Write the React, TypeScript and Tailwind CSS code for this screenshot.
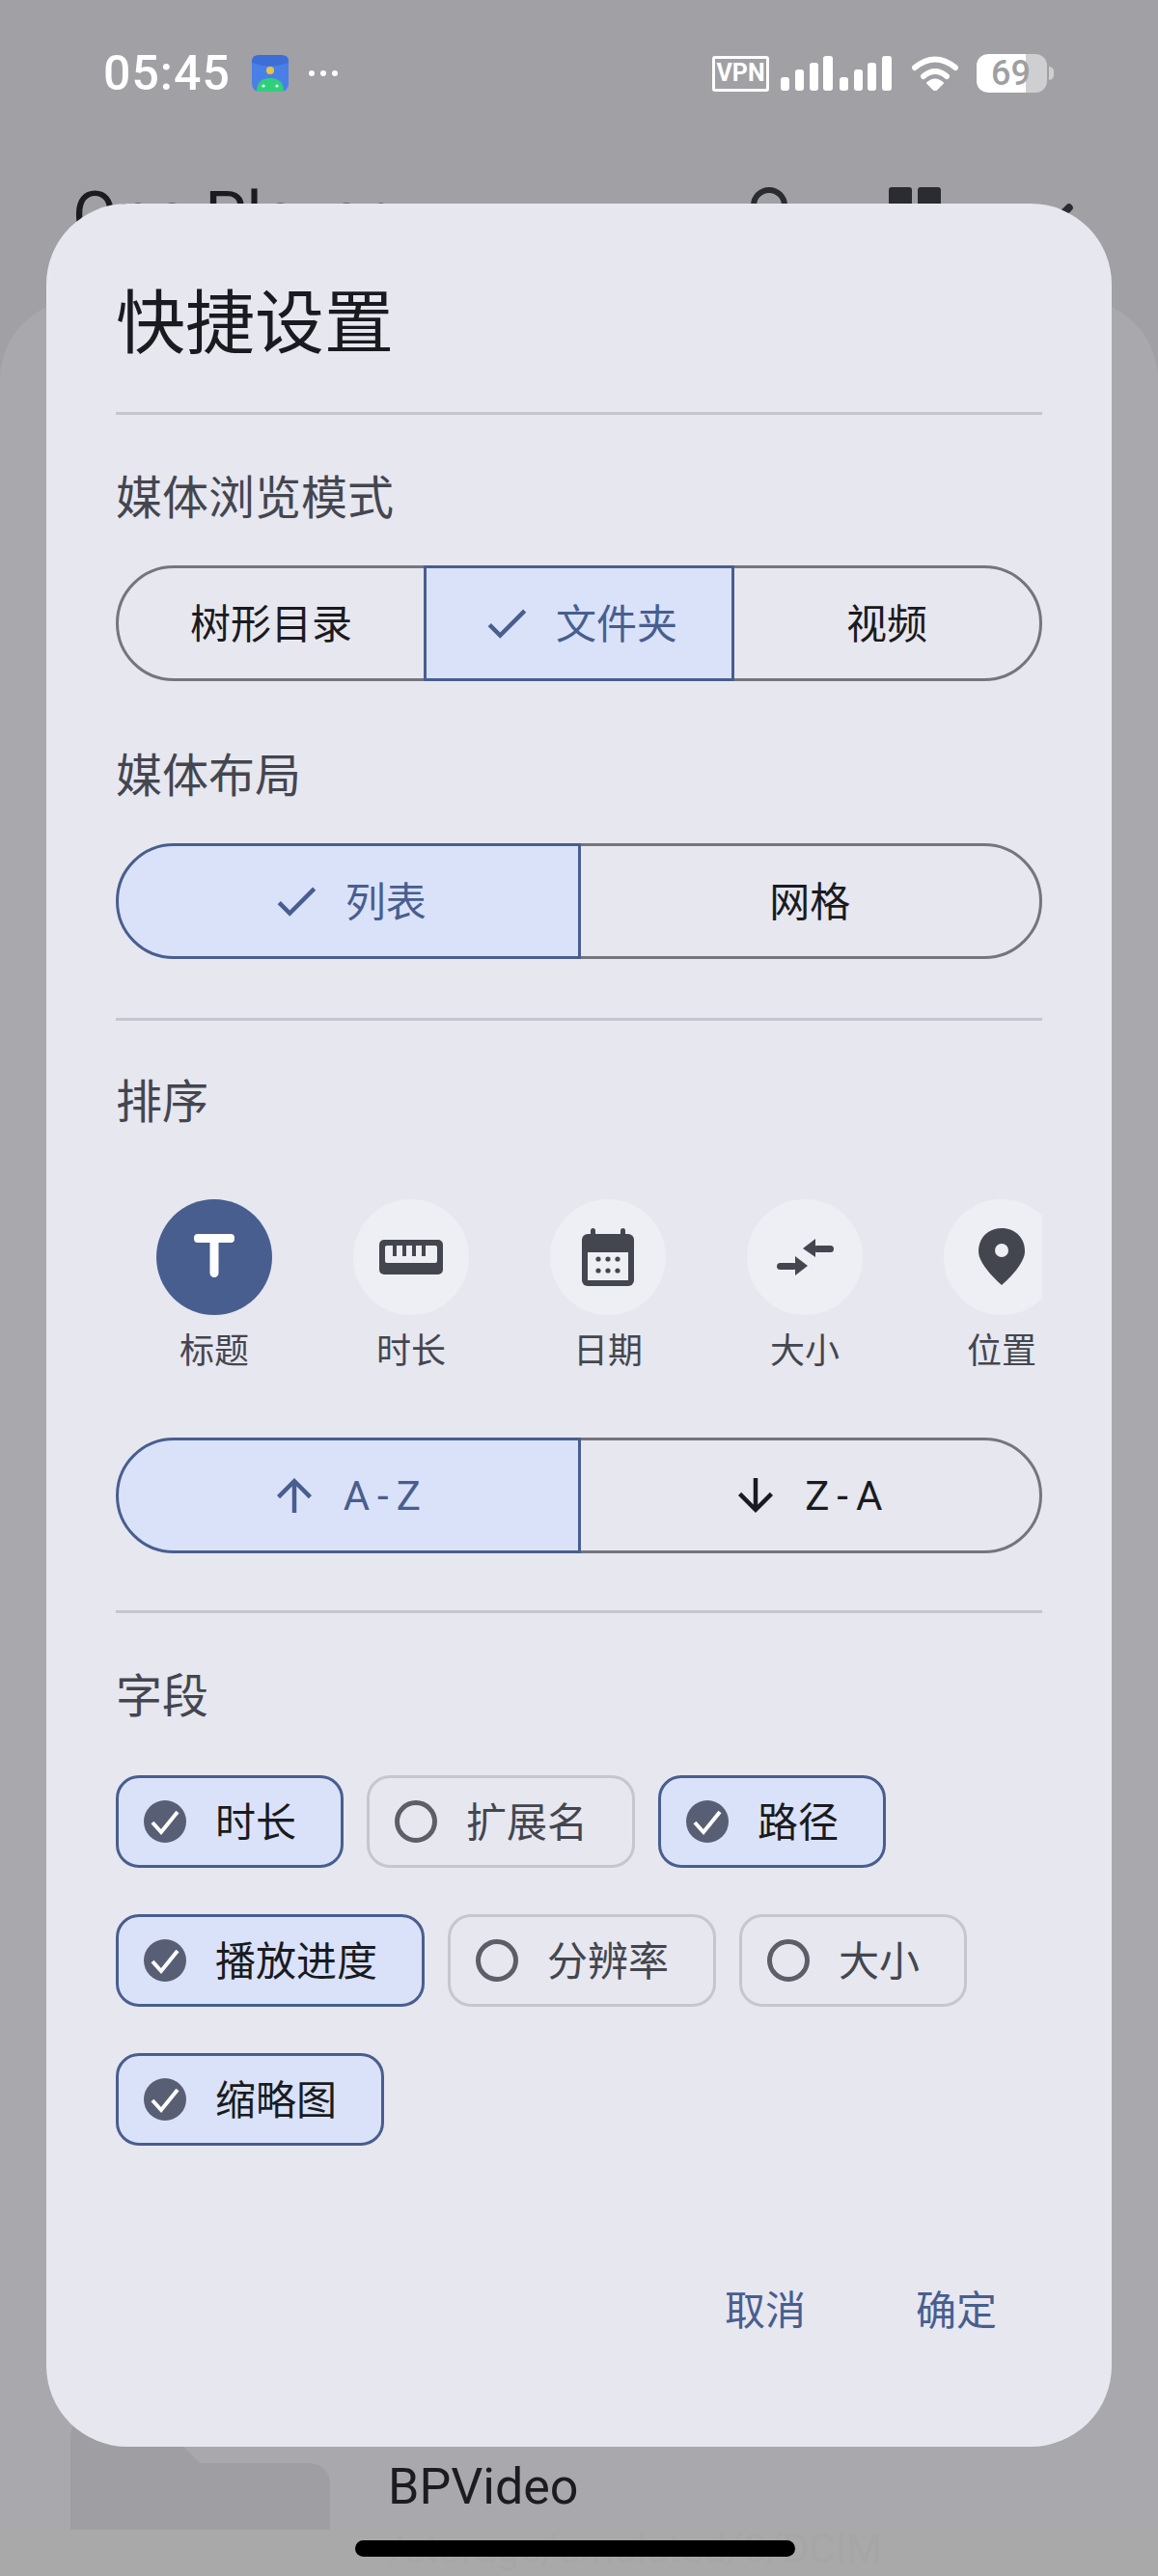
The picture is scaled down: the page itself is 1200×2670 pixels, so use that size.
import type { ReactNode } from "react";

const CHECK = "M9 16.17L4.83 12l-1.42 1.41L9 19 21 7l-1.41-1.41z";
const ARROW_UP = "M4 12l1.41 1.41L11 7.83V20h2V7.83l5.58 5.59L20 12l-8-8-8 8z";
const ARROW_DOWN = "M20 12l-1.41-1.41L13 16.17V4h-2v12.17l-5.58-5.59L4 12l8 8 8-8z";

const fields = [
  { label: "时长", on: true },
  { label: "扩展名", on: false },
  { label: "路径", on: true },
  { label: "播放进度", on: true },
  { label: "分辨率", on: false },
  { label: "大小", on: false },
  { label: "缩略图", on: true },
];

function Glyph({ d }: { d: string }) {
  return (
    <svg viewBox="0 0 24 24" className="w-[54px] h-[54px] shrink-0 fill-current">
      <path d={d} />
    </svg>
  );
}

function Segmented({
  items,
}: {
  items: { label: string; on?: boolean; icon?: string; latin?: boolean }[];
}) {
  return (
    <div className="flex h-[120px]">
      {items.map((item, i) => (
        <div
          key={item.label}
          className={`relative flex-1 flex items-center justify-center gap-[24px] border-[3px] text-[42px] ${
            i > 0 ? "-ml-[3px]" : ""
          } ${i === 0 ? "rounded-l-full" : ""} ${
            i === items.length - 1 ? "rounded-r-full" : ""
          } ${
            item.on
              ? "z-10 border-[#485e8f] bg-[#dae2f9] text-[#485e8f]"
              : "border-[#75757d] text-[#1a1b20]"
          }`}
        >
          {item.icon && <Glyph d={item.icon} />}
          <span className={item.latin ? "tracking-[8px]" : "pt-[3px]"}>{item.label}</span>
        </div>
      ))}
    </div>
  );
}

function SectionLabel({ className, children }: { className: string; children: ReactNode }) {
  return <div className={`text-[48px] leading-[64px] text-[#44464f] ${className}`}>{children}</div>;
}

function Divider({ className }: { className: string }) {
  return <div className={`h-[3px] bg-[#c5c6d0] ${className}`} />;
}

function SortItem({ label, on, children }: { label: string; on?: boolean; children: ReactNode }) {
  return (
    <div className="w-[204px] shrink-0 flex flex-col items-center">
      <div
        className={`w-[120px] h-[120px] rounded-full flex items-center justify-center ${
          on ? "bg-[#485e8f]" : "bg-[#eeeef5]"
        }`}
      >
        <svg viewBox="0 0 72 72" className="w-[72px] h-[72px]">
          {children}
        </svg>
      </div>
      <div className="mt-[14px] text-[36px] leading-[48px] text-[#44464f]">{label}</div>
    </div>
  );
}

function FieldChip({ label, on }: { label: string; on: boolean }) {
  return (
    <div
      className={`h-[96px] flex items-center pl-[26px] pr-[46px] rounded-[24px] border-[3px] text-[42px] ${
        on
          ? "border-[#485e8f] bg-[#dae2f9] text-[#1a1b20]"
          : "border-[#c5c6d0] text-[#44464f]"
      }`}
    >
      {on ? (
        <svg viewBox="0 0 44 44" className="w-[44px] h-[44px] mr-[30px]">
          <circle cx="22" cy="22" r="22" fill="#585f75" />
          <path d="M9 23l9 10 17-21" fill="none" stroke="#ffffff" strokeWidth="4" />
        </svg>
      ) : (
        <div className="w-[44px] h-[44px] mr-[30px] rounded-full border-[5px] border-[#5c5f68]" />
      )}
      <span className="pt-[3px]">{label}</span>
    </div>
  );
}

function StatusBar() {
  return (
    <div className="h-[150px] pl-[107px] pr-[108px] pt-[56px] flex items-start justify-between text-white">
      <div className="flex items-center h-[40px]">
        <span className="text-[50px] font-medium leading-[40px] tracking-[1px]">05:45</span>
        <svg viewBox="0 0 38 38" className="w-[38px] h-[38px] ml-[22px]">
          <rect width="38" height="38" rx="8" fill="#4a7fe8" />
          <path d="M0 8 Q19 15 38 8 V6 Q38 0 30 0 H8 Q0 0 0 6Z" fill="#3d6ed6" />
          <circle cx="19" cy="16" r="4" fill="#e8c24a" />
          <path d="M5 38 Q5 24 19 24 Q33 24 33 38Z" fill="#2fd07a" />
          <circle cx="12" cy="32" r="1.6" fill="#ffffff" />
          <circle cx="26" cy="32" r="1.6" fill="#ffffff" />
        </svg>
        <div className="flex gap-[6px] ml-[21px]">
          <div className="w-[6px] h-[6px] rounded-full bg-white" />
          <div className="w-[6px] h-[6px] rounded-full bg-white" />
          <div className="w-[6px] h-[6px] rounded-full bg-white" />
        </div>
      </div>
      <div className="flex items-center h-[40px]">
        <div className="w-[59px] h-[37px] border-[3px] border-white rounded-[3px] flex items-center justify-center text-[25px] font-bold">
          VPN
        </div>
        <svg viewBox="0 0 115 36" className="w-[115px] h-[36px] ml-[12px] fill-white">
          <rect x="0" y="22" width="9" height="14" rx="3" />
          <rect x="15" y="14" width="9" height="22" rx="3" />
          <rect x="30" y="7" width="9" height="29" rx="3" />
          <rect x="44" y="0" width="10" height="36" rx="3" />
          <rect x="61" y="22" width="9" height="14" rx="3" />
          <rect x="76" y="14" width="9" height="22" rx="3" />
          <rect x="90" y="7" width="9" height="29" rx="3" />
          <rect x="105" y="0" width="10" height="36" rx="3" />
        </svg>
        <svg viewBox="0 0 48 36" className="w-[48px] h-[36px] ml-[21px]">
          <path d="M3 12 Q24 -5 45 12" fill="none" stroke="#fff" strokeWidth="6" strokeLinecap="round" />
          <path d="M12 21 Q24 11 36 21" fill="none" stroke="#fff" strokeWidth="6" strokeLinecap="round" />
          <path d="M24 36 L16 28 Q24 21 32 28Z" fill="#fff" stroke="#fff" strokeWidth="2" strokeLinejoin="round" />
        </svg>
        <div className="relative flex ml-[19px] w-[73px] h-[40px] rounded-[12px] overflow-hidden">
          <div className="w-[51px] bg-white" />
          <div className="flex-1 bg-[#cfcfd2]" />
          <span className="absolute inset-0 pl-[15px] text-[36px] leading-[40px] font-medium text-[#9f9fa3]">
            69
          </span>
        </div>
        <div className="w-[5px] h-[14px] ml-[2px] rounded-r-full bg-[#cfcfd2]" />
      </div>
    </div>
  );
}

function Dialog() {
  return (
    <div className="absolute left-[48px] right-[48px] top-[211px] h-[2325px] rounded-[84px] bg-[#e7e7f0] px-[72px]">
      <div className="pt-[64px] pb-[30px] text-[72px] leading-[122px] text-[#1a1b20]">快捷设置</div>
      <Divider className="mt-0" />

      <SectionLabel className="mt-[55px]">媒体浏览模式</SectionLabel>
      <div className="mt-[37px]">
        <Segmented
          items={[
            { label: "树形目录" },
            { label: "文件夹", on: true, icon: CHECK },
            { label: "视频" },
          ]}
        />
      </div>

      <SectionLabel className="mt-[67px]">媒体布局</SectionLabel>
      <div className="mt-[37px]">
        <Segmented items={[{ label: "列表", on: true, icon: CHECK }, { label: "网格" }]} />
      </div>

      <Divider className="mt-[61px]" />
      <SectionLabel className="mt-[53px]">排序</SectionLabel>

      <div className="mt-[68px] flex overflow-hidden">
        <SortItem label="标题" on>
          <rect x="15" y="12" width="42" height="9" rx="4" fill="#ffffff" />
          <rect x="31.5" y="12" width="9" height="45" rx="4.5" fill="#ffffff" />
        </SortItem>
        <SortItem label="时长">
          <rect x="3" y="18" width="66" height="36" rx="5" fill="#44464f" />
          <rect x="9" y="24" width="54" height="18" rx="2" fill="#eeeef5" />
          <rect x="17" y="24" width="4" height="11" fill="#44464f" />
          <rect x="27" y="24" width="4" height="11" fill="#44464f" />
          <rect x="37" y="24" width="4" height="11" fill="#44464f" />
          <rect x="47" y="24" width="4" height="11" fill="#44464f" />
        </SortItem>
        <SortItem label="日期">
          <rect x="18" y="6" width="5" height="10" rx="2.5" fill="#44464f" />
          <rect x="49" y="6" width="5" height="10" rx="2.5" fill="#44464f" />
          <rect x="9" y="12" width="54" height="54" rx="6" fill="#44464f" />
          <rect x="15" y="31" width="42" height="29" fill="#eeeef5" />
          <circle cx="26" cy="38" r="2.6" fill="#44464f" />
          <circle cx="36" cy="38" r="2.6" fill="#44464f" />
          <circle cx="46" cy="38" r="2.6" fill="#44464f" />
          <circle cx="26" cy="50" r="2.6" fill="#44464f" />
          <circle cx="36" cy="50" r="2.6" fill="#44464f" />
          <circle cx="46" cy="50" r="2.6" fill="#44464f" />
        </SortItem>
        <SortItem label="大小">
          <path d="M34 27 L47 17 V36Z" fill="#44464f" />
          <rect x="45" y="24" width="21" height="7" rx="3.5" fill="#44464f" />
          <path d="M39 45 L26 35 V55Z" fill="#44464f" />
          <rect x="7" y="42" width="21" height="7" rx="3.5" fill="#44464f" />
        </SortItem>
        <SortItem label="位置">
          <path d="M36 6 C22 6 12 16 12 30 C12 42 28 58 36 65 C44 58 60 42 60 30 C60 16 50 6 36 6Z" fill="#44464f" />
          <circle cx="36" cy="29" r="7" fill="#eeeef5" />
        </SortItem>
      </div>

      <div className="mt-[65px]">
        <Segmented
          items={[
            { label: "A-Z", on: true, icon: ARROW_UP, latin: true },
            { label: "Z-A", icon: ARROW_DOWN, latin: true },
          ]}
        />
      </div>

      <Divider className="mt-[59px]" />
      <SectionLabel className="mt-[55px]">字段</SectionLabel>

      <div className="mt-[49px] flex flex-wrap gap-x-[24px] gap-y-[48px]">
        {fields.map((f) => (
          <FieldChip key={f.label} label={f.label} on={f.on} />
        ))}
      </div>

      <div className="mt-[140px] flex justify-end gap-[114px] pr-[47px] text-[42px] leading-[64px] text-[#485e8f]">
        <span>取消</span>
        <span>确定</span>
      </div>
    </div>
  );
}

export default function App() {
  return (
    <div className="relative w-[1200px] h-[2670px] overflow-hidden bg-[#a0a0a5] font-['Roboto','Noto_Sans_CJK_SC',sans-serif]">
      <StatusBar />

      {/* app bar behind the dialog, only its top edge shows */}
      <div className="h-[160px] pl-[75px] pr-[96px] flex items-start justify-between text-[#1b1b20]">
        <div className="mt-[38px] text-[68px] leading-[72px]">One Player</div>
        <div className="flex mt-[44px]">
          <div className="w-[38px] h-[38px] rounded-full border-[6px] border-[#2b2b32]" />
          <div className="ml-[105px] flex gap-[6px]">
            <div className="w-[24px] h-[40px] rounded-[3px] bg-[#2b2b32]" />
            <div className="w-[24px] h-[40px] rounded-[3px] bg-[#2b2b32]" />
          </div>
          <div className="ml-[121px] mt-[14px] w-[8px] h-[30px] rotate-45 rounded-full bg-[#2b2b32]" />
        </div>
      </div>

      <div className="h-[2360px] rounded-t-[84px] bg-[#a9a8ad] flex flex-col justify-end pl-[73px] pb-[3px]">
        <div className="flex items-end">
          <svg viewBox="0 0 269 122" className="w-[269px] h-[122px] mb-[45px] shrink-0">
            <path d="M0 30 Q0 0 30 0 H82 L134 53 H245 Q269 53 269 77 V122 H0Z" fill="#9f9ea3" />
          </svg>
          <div className="ml-[60px]">
            <div className="text-[52px] leading-[60px] text-[#1b1b20]">BPVideo</div>
            <div className="text-[42px] leading-[50px] mt-[9px] text-[#8f8f93]">/storage/emulated/0/DCIM</div>
          </div>
        </div>
      </div>

      {/* gesture bar */}
      <div className="absolute left-0 right-0 bottom-0 h-[48px] bg-[#a9a9a9]/90 flex justify-center pt-[11px] pr-[8px]">
        <div className="w-[456px] h-[17px] rounded-full bg-black" />
      </div>

      <Dialog />
    </div>
  );
}
